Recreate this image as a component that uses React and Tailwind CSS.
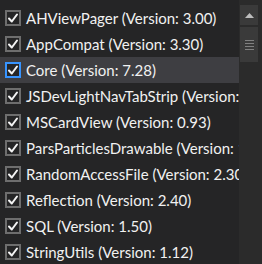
import React from "react";

const packages = [
  { name: "AHViewPager", version: "3.00" },
  { name: "AppCompat", version: "3.30" },
  { name: "Core", version: "7.28", selected: true },
  { name: "JSDevLightNavTabStrip", version: "1.00" },
  { name: "MSCardView", version: "0.93" },
  { name: "ParsParticlesDrawable", version: "1.00" },
  { name: "RandomAccessFile", version: "2.30" },
  { name: "Reflection", version: "2.40" },
  { name: "SQL", version: "1.50" },
  { name: "StringUtils", version: "1.12" },
];

function CheckBox({ focused }) {
  return (
    <div
      className={
        "w-[16px] h-[16px] shrink-0 flex items-center justify-center border-2 bg-[#252526] " +
        (focused ? "border-[#3794ff]" : "border-[#6e6e6e]")
      }
    >
      <svg width="12" height="12" viewBox="0 0 12 12">
        <path
          d="M2 6.5 L4.8 9.5 L10 2.5"
          fill="none"
          stroke="#f4f4f4"
          strokeWidth="2"
          strokeLinecap="round"
          strokeLinejoin="round"
        />
      </svg>
    </div>
  );
}

export default function App() {
  return (
    <div
      className="w-[262px] h-[264px] bg-[#252526] flex overflow-hidden text-[#f1f1f1]"
      style={{ fontFamily: 'Lato, "Noto Sans", sans-serif' }}
    >
      {/* List */}
      <div className="w-[239px] shrink-0 pt-[5px] overflow-hidden">
        {packages.map((p) => (
          <div
            key={p.name}
            className={
              "h-[26px] flex items-center pl-[5px] gap-[5px] whitespace-nowrap " +
              (p.selected ? "bg-[#3e3e42]" : "")
            }
          >
            <CheckBox focused={p.selected} />
            <span className="text-[15px] leading-none">
              {p.name} (Version: {p.version})
            </span>
          </div>
        ))}
      </div>

      {/* Scrollbar */}
      <div className="flex-1 bg-[#2b2b2b] pt-[5px] pl-[1px] pr-[4px] flex flex-col gap-[2px]">
        <div className="h-[20px] bg-[#3a3a3a] flex items-center justify-center">
          <svg width="9" height="5" viewBox="0 0 9 5">
            <path d="M0 5 L4.5 0 L9 5 Z" fill="#bdbdbd" />
          </svg>
        </div>
        <div className="h-[35px] bg-[#3a3a3a] flex flex-col items-center justify-center gap-[2px]">
          <div className="w-[9px] h-[1px] bg-[#808080]" />
          <div className="w-[9px] h-[1px] bg-[#808080]" />
          <div className="w-[9px] h-[1px] bg-[#808080]" />
          <div className="w-[9px] h-[1px] bg-[#808080]" />
        </div>
      </div>
    </div>
  );
}
